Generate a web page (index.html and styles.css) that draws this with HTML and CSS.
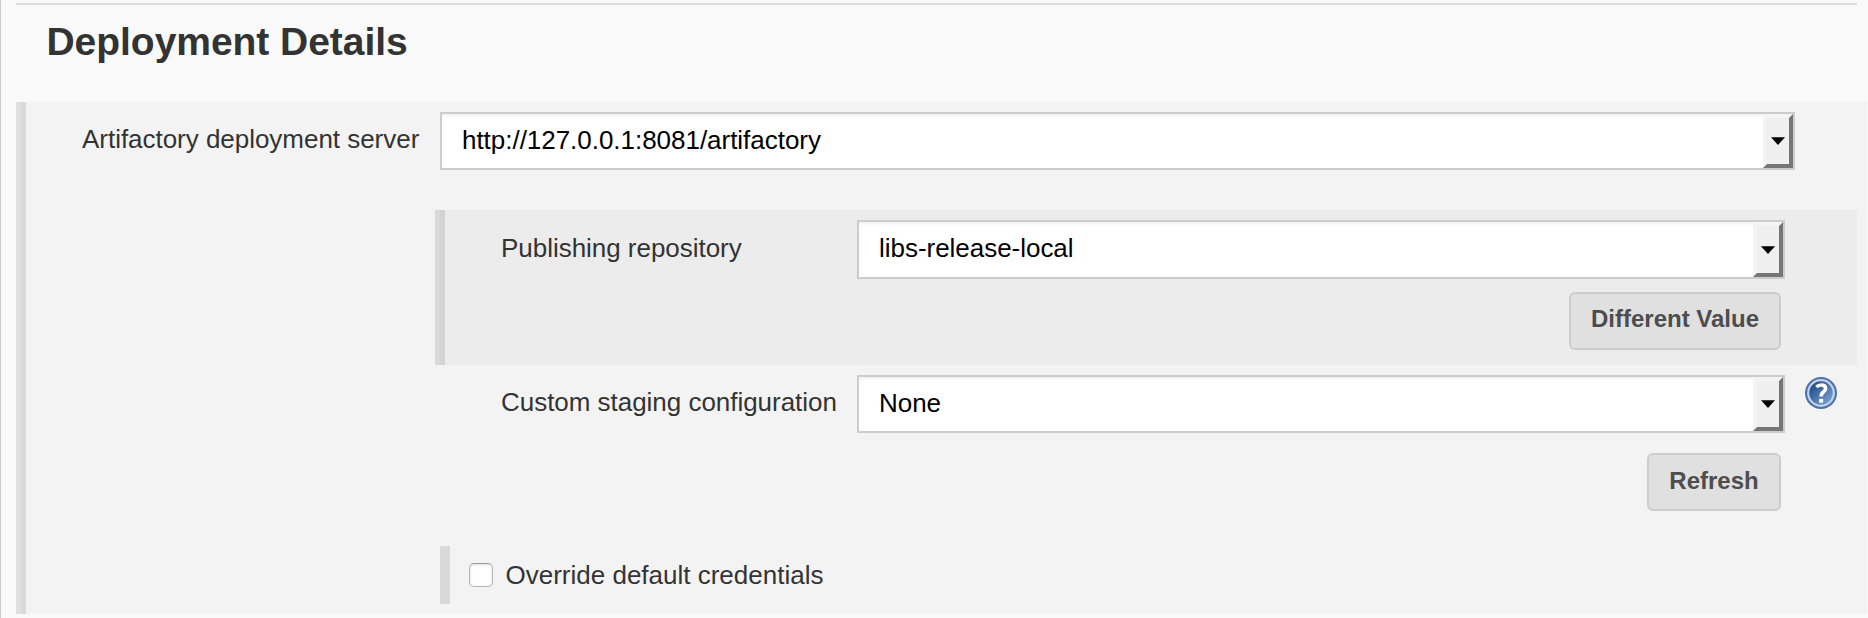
FILE: index.html
```html
<!DOCTYPE html>
<html lang="en">
<head>
<meta charset="utf-8">
<title>Deployment Details</title>
<link rel="stylesheet" href="styles.css">
</head>
<body>
<main class="page">
  <h1 class="heading">Deployment Details</h1>
  <section class="group">
    <div class="row row-server">
      <span class="label">Artifactory deployment server</span>
      <div class="select"><span class="value">http://127.0.0.1:8081/artifactory</span><span class="arrow"><svg width="14" height="8" viewBox="0 0 14 8"><path d="M0 .3h14L7 8z"/></svg></span></div>
    </div>
    <div class="nested">
      <div class="row">
        <span class="label">Publishing repository</span>
        <div class="select select-tall"><span class="value">libs-release-local</span><span class="arrow"><svg width="14" height="8" viewBox="0 0 14 8"><path d="M0 .3h14L7 8z"/></svg></span></div>
      </div>
      <button class="button button-value" type="button">Different Value</button>
    </div>
    <div class="staging">
      <div class="row">
        <span class="label">Custom staging configuration</span>
        <div class="select"><span class="value">None</span><span class="arrow"><svg width="14" height="8" viewBox="0 0 14 8"><path d="M0 .3h14L7 8z"/></svg></span></div>
        <svg class="help" width="32" height="32" viewBox="0 0 32 32">
          <defs><linearGradient id="blue" x1="0" y1="0" x2="1" y2="1"><stop offset=".15" stop-color="#204a87"/><stop offset=".9" stop-color="#7ba3d4"/></linearGradient></defs>
          <circle cx="16" cy="16" r="16" fill="#4a72ab"/>
          <circle cx="16" cy="16" r="12.8" fill="url(#blue)" stroke="#c3d2e6" stroke-width="2.2"/>
          <path d="M11.4 10Q13.4 8 16.2 8Q20.6 8 20.6 11.4Q20.6 13.4 18.4 15Q16.2 16.6 16.2 19.4" fill="none" stroke="#fff" stroke-width="3.6"/>
          <rect x="14" y="21.8" width="4.2" height="4" rx="1" fill="#fff"/>
        </svg>
      </div>
      <button class="button button-refresh" type="button">Refresh</button>
    </div>
    <div class="override">
      <input class="check" type="checkbox" id="override">
      <label for="override">Override default credentials</label>
    </div>
  </section>
</main>
</body>
</html>
```
FILE: styles.css
```css
* { box-sizing: border-box; }
body {
  margin: 0;
  background: #f9f9f9;
  color: #333;
  font: 26px/30px "Liberation Sans", Arial, sans-serif;
}
.page {
  height: 618px;
  overflow: hidden;
  padding: 3px 1px 0 15px;
  border-left: 1px solid #ccc;
}
.heading {
  height: 99px;
  margin: 0 10px 0 0;
  padding: 14px 0 0 30.5px;
  border-top: 2px solid #ddd;
  font-size: 39px;
  line-height: 46px;
  letter-spacing: -0.04px;
}
.group {
  height: 512px;
  padding-top: 10px;
  background: linear-gradient(90deg, #e0e0e0 5px, #d9d9d9 5px, #d9d9d9 10px, #f3f3f3 10px);
}
.row { display: flex; align-items: flex-start; }
.label {
  flex: none;
  padding-top: 12px;
  letter-spacing: -0.03px;
}
.row-server { padding: 0 72px 0 66px; }
.row-server .label { width: 358px; }
.select {
  flex: 1;
  display: flex;
  justify-content: space-between;
  height: 58px;
  border: 2px solid #ccc;
  background: linear-gradient(#f0f0f0, #fff 4px);
  color: #000;
}
.select-tall { height: 59px; }
.value {
  padding: 11px 0 0 20px;
  letter-spacing: -0.03px;
}
.arrow {
  width: 30px;
  display: flex;
  align-items: center;
  justify-content: center;
  border: 4px solid;
  border-color: #f4f4f4 #767676 #767676 #f4f4f4;
  background: #efefef;
}
.arrow svg { display: block; }
.nested {
  height: 155px;
  margin: 40px 10px 0 419px;
  padding: 10px 72px 0 66px;
  background: linear-gradient(90deg, #d9d9d9 5px, #d3d3d3 5px, #d3d3d3 10px, #ececec 10px);
}
.nested .label, .staging .label { width: 356px; }
.nested .label { padding-top: 13px; }
.button {
  display: block;
  height: 58px;
  margin-left: auto;
  padding: 0 0 4px;
  border: 2px solid #ccc;
  border-radius: 6px;
  background: #e0e0e0;
  color: #4d4d4d;
  font: bold 24px/30px "Liberation Sans", Arial, sans-serif;
}
.button-value { width: 212px; margin-top: 13px; margin-right: 4px; }
.staging { height: 181px; padding: 10px 30px 0 485px; }
.help { display: block; margin: 2px 0 0 20px; }
.button-refresh { width: 134px; margin-top: 20px; margin-right: 56px; padding-bottom: 2px; }
.override {
  display: flex;
  align-items: center;
  height: 58px;
  margin-left: 424px;
  padding-left: 19px;
  border-left: 10px solid #d9d9d9;
}
.check {
  appearance: none;
  width: 24px;
  height: 24px;
  margin: 0 12.5px 0 0;
  border: 1px solid #b5b5b5;
  border-top-color: #999;
  border-radius: 5px;
  background: #fff;
  box-shadow: inset 0 1px 3px #ddd;
}
```
